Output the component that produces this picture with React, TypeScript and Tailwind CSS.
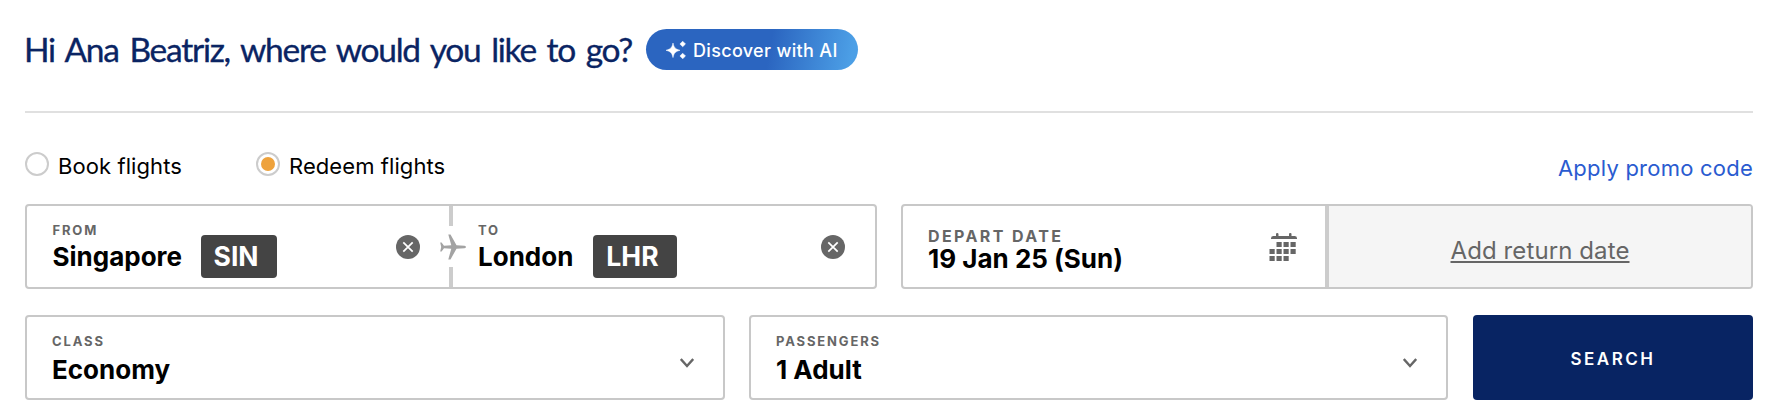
import type { ReactNode } from "react";

function Sparkles() {
  return (
    <svg viewBox="0 0 20 18" className="h-[18px] w-5 shrink-0" fill="#fff">
      <path d="M7 2C8 6.6 9.200 8 14 9.300 9.200 10.600 8 12 7 16.600 6 12 4.800 10.600 0 9.300 4.800 8 6 6.600 7 2Z" stroke="#fff" strokeWidth=".5" />
      <path d="M16.700 .2 19.500 3 16.700 5.800 13.900 3Z" stroke="#fff" strokeWidth=".5" />
      <path d="M16.700 12.200 19.500 15 16.700 17.800 13.900 15Z" stroke="#fff" strokeWidth=".5" />
    </svg>
  );
}

function ClearButton({ className }: { className: string }) {
  return (
    <button aria-label="Clear" className={`ml-auto self-center ${className}`}>
      <svg viewBox="0 0 24 24" className="h-6 w-6">
        <circle cx="12" cy="12" r="12" fill="#666" />
        <path d="M7.300 7.300 16.700 16.700M16.700 7.300 7.300 16.700" stroke="#fff" strokeWidth="1.700" />
      </svg>
    </button>
  );
}

function Plane() {
  return (
    <svg viewBox="0 0 26 26" className="absolute top-7 -left-[9px] h-[26px] w-[26px]" fill="#a3a3a3">
      <path d="M8.300.6h2.200l6 10.700 8 .5q1.500.4 1.500 1.200t-1.500 1.200l-8 .5-6 10.700H8.300l3-10.700-7.300-.4L1.600 17.500H.2L1.200 13 .2 8.500h1.400L4 11.700l7.300-.4Z" />
    </svg>
  );
}

const calendarCells = [
  [7.5, 9], [14.5, 9], [21.5, 9],
  [0.5, 16], [7.5, 16], [14.5, 16], [21.5, 16],
  [0.5, 23], [7.5, 23], [14.5, 23],
];

function Calendar() {
  return (
    <svg viewBox="0 0 28 28" className="mt-[27px] mr-7 ml-auto h-7 w-7 shrink-0" fill="#666">
      <path d="M2 6V5.300Q2 3 4.500 3H7V1Q7 0 8.200 0T9.500 1V3H20V1Q20 0 21.300 0T22.500 1V3H25.500Q28 3 28 5.300V6Z" />
      {calendarCells.map(([x, y]) => (
        <rect key={`${x}-${y}`} x={x} y={y} width="5.2" height="5" />
      ))}
    </svg>
  );
}

function Radio({ label, checked }: { label: string; checked?: boolean }) {
  return (
    <label className="flex items-start">
      <span className="flex h-6 w-6 items-center justify-center rounded-full border-2 border-[#ccc] bg-white">
        {checked && <span className="h-[14px] w-[14px] rounded-full bg-[#eea23c]" />}
      </span>
      <span className="ml-[9px] pt-px text-[22px] leading-[26px] tracking-[0.08px] whitespace-nowrap text-black">{label}</span>
    </label>
  );
}

function Label({ children }: { children: ReactNode }) {
  return <div className="text-[13px] leading-4 font-bold tracking-[1.85px] text-[#666]">{children}</div>;
}

function Airport({ label, city, code, badge, clear }: { label: string; city: string; code: string; badge: string; clear: string }) {
  return (
    <div className="flex min-w-0 flex-1 items-start">
      <div className="pt-4">
        <Label>{label}</Label>
        <div className="mt-1 text-[26px] leading-[30px] font-bold text-black">{city}</div>
      </div>
      <div className={`mt-[29px] flex h-[43px] items-center rounded-[4px] bg-[#444] pt-px pl-[13px] text-[26.5px] font-bold text-white ${badge}`}>{code}</div>
      <ClearButton className={clear} />
    </div>
  );
}

function SelectField({ label, value, width }: { label: string; value: string; width: string }) {
  return (
    <div className={`flex h-[85px] items-start rounded-[4px] border-2 border-[#c8c8c8] pl-[25px] ${width}`}>
      <div className="pt-4">
        <Label>{label}</Label>
        <div className="mt-1.5 text-[26px] leading-[30px] font-bold text-black">{value}</div>
      </div>
      <svg viewBox="0 0 14 10" className="mt-[41px] mr-[29px] ml-auto h-[10px] w-[14px]" fill="none" stroke="#666" strokeWidth="2.4">
        <path d="M.8 1 7 8 13.200 1" />
      </svg>
    </div>
  );
}

export default function App() {
  return (
    <main className="h-[416px] w-[1778px] overflow-hidden bg-white px-[25px] pt-[29px] font-['Inter',sans-serif]">
      <header className="flex h-[41px] items-center">
        <div className="w-[621px]">
          <h1 className="-ml-px font-['Lato',sans-serif] text-[33.5px] leading-[41px] tracking-[-1.25px] [word-spacing:3.4px] whitespace-nowrap text-[#0a2463] [-webkit-text-stroke:0.35px_#0a2463]">
            Hi Ana Beatriz, where would you like to go?
          </h1>
        </div>
        <button className="flex h-[41px] w-[212px] items-center gap-[7px] rounded-full bg-linear-[100deg,#2b65c0_0%,#2b65c0_58%,#4c9fe6_96%] pl-5 text-[18px] font-medium tracking-[0.33px] whitespace-nowrap text-white">
          <Sparkles />
          <span className="pt-px">Discover with AI</span>
        </button>
      </header>

      <hr className="mt-[41px] h-[2px] border-0 bg-[#e0e0e0]" />

      <div className="mt-[39px] flex h-[52px] items-start">
        <div className="w-[231px]">
          <Radio label="Book flights" />
        </div>
        <Radio label="Redeem flights" checked />
        <a className="mt-[3px] ml-auto text-[22px] leading-[26px] tracking-[0.23px] text-[#2a5bd0]">Apply promo code</a>
      </div>

      <div className="flex gap-6">
        <div className="flex h-[85px] w-[852px] rounded-[4px] border-2 border-[#c8c8c8] pl-[25.5px]">
          <Airport label="FROM" city="Singapore" code="SIN" badge="ml-[18.5px] w-[76px]" clear="mr-[29px]" />
          <div className="relative flex w-1 flex-col justify-between">
            <span className="h-5 bg-[#ccc]" />
            <span className="h-5 bg-[#ccc]" />
            <Plane />
          </div>
          <div className="flex w-[422px] pl-[25px]">
            <Airport label="TO" city="London" code="LHR" badge="ml-5 w-[84px]" clear="mr-[30px]" />
          </div>
        </div>
        <div className="flex h-[85px] w-[852px] overflow-hidden rounded-[4px] border-2 border-[#c8c8c8]">
          <div className="flex w-[422px] items-start pl-[25px]">
            <div className="pt-5 whitespace-nowrap">
              <div className="text-[16px] leading-5 font-bold tracking-[2.4px] text-[#666]">DEPART DATE</div>
              <div className="text-[26px] leading-[26px] font-bold text-black">19 Jan 25 (Sun)</div>
            </div>
            <Calendar />
          </div>
          <div className="w-1 bg-[#ccc]" />
          <div className="flex flex-1 items-center justify-center bg-[#f5f5f5] pt-[9px]">
            <a className="text-[24px] tracking-[0.1px] text-[#666] underline decoration-2 underline-offset-[2px]">Add return date</a>
          </div>
        </div>
      </div>

      <div className="mt-[26px] flex">
        <SelectField label="CLASS" value="Economy" width="w-[700px]" />
        <SelectField label="PASSENGERS" value="1 Adult" width="ml-6 w-[699px]" />
        <button className="ml-[25px] h-[85px] w-[280px] rounded-[4px] bg-[#082463] pt-[5px] text-[17px] font-semibold tracking-[2.5px] text-white">
          SEARCH
        </button>
      </div>
    </main>
  );
}
